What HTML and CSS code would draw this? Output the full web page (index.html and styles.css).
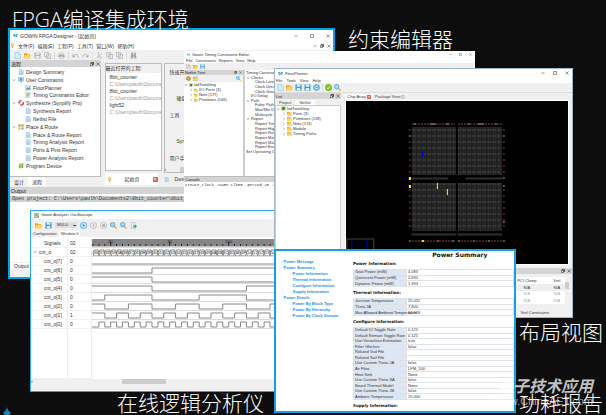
FILE: index.html
```
<!DOCTYPE html>
<html lang="zh-CN">

<head>
    <meta charset="UTF-8">
    <meta name="viewport" content="width=device-width, initial-scale=1.0">
    <title>GOWIN FPGA Designer</title>
    <link rel="stylesheet" href="styles.css">
</head>

<body>
    <svg class="sprite" aria-hidden="true">
        <symbol id="doc" viewBox="0 0 16 16"><path d="M3 1h8l3 3v11H3z" fill="#cfe8f7" stroke="#5aa5cf" /><path d="M5 6h7M5 9h7M5 12h7" stroke="#7fb2d0" /></symbol>
        <symbol id="page" viewBox="0 0 16 16"><path d="M2 1h9l4 4v10H2z" fill="#d9effb" stroke="#6cb4dc" /><path d="M10 1v5h5" fill="#fff" stroke="#6cb4dc" /></symbol>
        <symbol id="folder" viewBox="0 0 16 16"><path d="M0 3h6l2 2h6v9H0z" fill="#e9a623" /><path d="M2 7h14l-2 7H0z" fill="#ffd45c" /></symbol>
        <symbol id="save" viewBox="0 0 16 16"><path d="M1 1h14v14H1z" fill="#3f9bd4" /><path d="M4 1h8v5H4zM4 9h8v6H4z" fill="#dff1fb" /></symbol>
        <symbol id="save-off" viewBox="0 0 16 16"><path d="M1 1h14v14H1z" fill="#b5b5b5" /><path d="M4 1h8v5H4zM4 9h8v6H4z" fill="#eee" /></symbol>
        <symbol id="copy" viewBox="0 0 16 16"><path d="M1 1h9v10H1zM6 5h9v10H6z" fill="#eee" stroke="#aaa" stroke-width="1.5" /></symbol>
        <symbol id="print" viewBox="0 0 16 16"><path d="M1 6h14v6H1z" fill="#aaa" /><path d="M4 2h8v4H4zM4 10h8v5H4z" fill="#eee" stroke="#aaa" /></symbol>
        <symbol id="undo" viewBox="0 0 16 16"><path d="M4 8c3-4 9-3 10 4" fill="none" stroke="#aaa" stroke-width="2" /><path d="M1 5v7h7z" fill="#aaa" /></symbol>
        <symbol id="redo" viewBox="0 0 16 16"><path d="M12 8c-3-4-9-3-10 4" fill="none" stroke="#aaa" stroke-width="2" /><path d="M15 5v7H8z" fill="#aaa" /></symbol>
        <symbol id="cut" viewBox="0 0 16 16"><path d="M4 1l5 10M12 3L5 10" stroke="#aaa" stroke-width="1.5" /><circle cx="4" cy="12" r="2" fill="none" stroke="#aaa" /><circle cx="11" cy="13" r="2" fill="none" stroke="#aaa" /></symbol>
        <symbol id="find" viewBox="0 0 16 16"><path d="M3 1h4v5h2V1h4l2 14H9v-4H7v4H1z" fill="#aaa" /></symbol>
        <symbol id="zoom" viewBox="0 0 16 16"><path d="M9 9l6 6" stroke="#e8a33a" stroke-width="3" /><circle cx="6" cy="6" r="5" fill="#a8dbf5" stroke="#4ba3d6" stroke-width="2" /></symbol>
        <symbol id="check" viewBox="0 0 16 16"><circle cx="8" cy="8" r="8" fill="#7ac31d" /><path d="M4 8l3 3 5-6" fill="none" stroke="#fff" stroke-width="2" /></symbol>
        <symbol id="reload" viewBox="0 0 16 16"><circle cx="8" cy="8" r="7" fill="#5eb0e2" stroke="#358cc4" /><path d="M4 8a4 4 0 0 1 7-2M12 8a4 4 0 0 1-7 2" fill="none" stroke="#fff" stroke-width="2" /></symbol>
        <symbol id="play" viewBox="0 0 16 16"><circle cx="8" cy="8" r="7" fill="#d8effc" stroke="#3fa0dc" stroke-width="2" /><path d="M6 4l6 4-6 4z" fill="#3fa0dc" /></symbol>
        <symbol id="play-off" viewBox="0 0 16 16"><circle cx="8" cy="8" r="7" fill="#eee" stroke="#bbb" stroke-width="2" /><path d="M10 4L5 8l5 4z" fill="#bbb" /></symbol>
        <symbol id="stop-off" viewBox="0 0 16 16"><circle cx="8" cy="8" r="7" fill="#eee" stroke="#bbb" stroke-width="2" /><path d="M5 5h6v6H5z" fill="#aaa" /></symbol>
        <symbol id="export" viewBox="0 0 16 16"><path d="M3 1h9v14H3z" fill="#e4f0f6" stroke="#8ab" /><path d="M7 8h4V5l5 5-5 5v-3H7z" fill="#4cae4c" /></symbol>
        <symbol id="filter" viewBox="0 0 16 16"><path d="M1 1h14v10H1z" fill="#b9dff5" stroke="#4b94c4" /><path d="M4 4h8l-3 4v7H7V8z" fill="#3c7fb0" /></symbol>
        <symbol id="plan" viewBox="0 0 16 16"><path d="M1 2h14v12H1z" fill="#d4e9ee" stroke="#8ab" /><path d="M3 11l4-5 3 3 3-4v7H3z" fill="#3f9b9b" /><path d="M11 3h3v3h-3z" fill="#e8a33a" /></symbol>
        <symbol id="clock" viewBox="0 0 16 16"><path d="M2 1h12v14H2z" fill="#eef2e4" stroke="#9a9" /><path d="M4 5h8M4 8h8M4 11h5" stroke="#7a9a5a" stroke-width="2" /></symbol>
        <symbol id="synth" viewBox="0 0 16 16"><path d="M10 3C6 0 1 4 3 8l3-2M6 12c4 4 10 0 8-5l-3 2" fill="none" stroke="#c8405a" stroke-width="3" /></symbol>
        <symbol id="route" viewBox="0 0 16 16"><path d="M1 1h6v6H1z" fill="#e77" /><path d="M9 1h6v6H9z" fill="#7ac31d" /><path d="M1 9h6v6H1z" fill="#f2c04a" /><path d="M9 9h6v6H9z" fill="#5eb0e2" /></symbol>
        <symbol id="down" viewBox="0 0 16 16"><path d="M3 1h4v8h3l-5 6-5-6h3z" fill="#7ac31d" /><path d="M9 1h5v12H9z" fill="#8ba04a" /></symbol>
        <symbol id="logo" viewBox="0 0 16 16"><path d="M0 5l4-3 4 4 4-4 4 3-4 9-4-3-4 3z" fill="#2d9fc9" /><path d="M4 6l4 6 4-6" fill="none" stroke="#d8f2fb" stroke-width="2" /></symbol>
        <symbol id="scope" viewBox="0 0 16 16"><path d="M1 1h14v14H1z" fill="#d6ecd2" stroke="#5a9a5a" stroke-width="2" /><path d="M3 9h3V5h4v6h3" fill="none" stroke="#3a7a3a" stroke-width="2" /></symbol>
        <symbol id="chip" viewBox="0 0 16 16"><path d="M2 2h12v12H2z" fill="#6ab02c" /><path d="M5 5h6v6H5z" fill="#3d741a" /></symbol>
        <symbol id="bulb" viewBox="0 0 16 16"><circle cx="8" cy="6" r="5" fill="#ffd45c" stroke="#e0a83a" /><path d="M6 11h4v4H6z" fill="#a98d4a" /></symbol>
        <symbol id="gear" viewBox="0 0 16 16"><circle cx="8" cy="8" r="6" fill="#d19a2a" stroke="#a87412" stroke-width="3" stroke-dasharray="3 1" /><circle cx="8" cy="8" r="2" fill="#f7e3b0" /></symbol>
        <symbol id="min" viewBox="0 0 16 16"><path d="M2 8h12" stroke="currentColor" stroke-width="2" /></symbol>
        <symbol id="max" viewBox="0 0 16 16"><path d="M2 2h12v12H2z" fill="none" stroke="currentColor" stroke-width="2" /></symbol>
        <symbol id="dock" viewBox="0 0 16 16"><path d="M5 2h9v8H5z" fill="none" stroke="currentColor" stroke-width="3" /><path d="M1 6h9v8H1z" fill="#ddd" stroke="currentColor" stroke-width="2" /></symbol>
        <symbol id="close" viewBox="0 0 16 16"><path d="M2 2l12 12M14 2L2 14" stroke="currentColor" stroke-width="2" /></symbol>
        <symbol id="open" viewBox="0 0 16 16"><path d="M3 5l5 6 5-6" fill="none" stroke="#555" stroke-width="2" /></symbol>
        <symbol id="shut" viewBox="0 0 16 16"><path d="M5 3l6 5-6 5" fill="none" stroke="#888" stroke-width="2" /></symbol>
        <pattern id="slices" width="5" height="6" patternUnits="userSpaceOnUse">
            <path d="M0 0h5v6H0z" fill="#2a2a2a" />
            <path d="M0 0v6M3 0v6" stroke="#141414" />
            <path d="M0 5h5" stroke="#454545" stroke-dasharray="2 1" />
        </pattern>
    </svg>

    <main class="desktop">
        <h1 class="caption caption-designer">FPGA编译集成环境</h1>
        <h2 class="caption caption-constraints">约束编辑器</h2>
        <h2 class="caption caption-floor">布局视图</h2>
        <h2 class="caption caption-scope">在线逻辑分析仪</h2>

        <section class="window designer">
            <header class="titlebar">
                <svg><use href="#logo" /></svg>
                <span>GOWIN FPGA Designer - [起始页]</span>
                <div class="controls">
                    <button aria-label="Minimize"><svg><use href="#min" /></svg></button>
                    <button aria-label="Maximize"><svg><use href="#max" /></svg></button>
                    <button aria-label="Close"><svg><use href="#close" /></svg></button>
                </div>
            </header>
            <nav class="menu">
                <svg><use href="#bulb" /></svg>
                <button>文件(F)</button>
                <button>编辑(E)</button>
                <button>工程(P)</button>
                <button>工具(T)</button>
                <button>窗口(W)</button>
                <button>帮助(H)</button>
                <div class="controls">
                    <button aria-label="Minimize page"><svg><use href="#min" /></svg></button>
                    <button aria-label="Restore page"><svg><use href="#dock" /></svg></button>
                    <button aria-label="Close page"><svg><use href="#close" /></svg></button>
                </div>
            </nav>
            <div class="toolbar">
                <button aria-label="New"><svg><use href="#page" /></svg></button>
                <button aria-label="Open"><svg><use href="#folder" /></svg></button>
                <button aria-label="Save"><svg><use href="#save-off" /></svg></button>
                <button aria-label="Save all"><svg><use href="#copy" /></svg></button>
                <i></i>
                <button aria-label="Print"><svg><use href="#print" /></svg></button>
                <i></i>
                <button aria-label="Undo"><svg><use href="#undo" /></svg></button>
                <button aria-label="Redo"><svg><use href="#redo" /></svg></button>
                <i></i>
                <button aria-label="Cut"><svg><use href="#cut" /></svg></button>
                <button aria-label="Copy"><svg><use href="#copy" /></svg></button>
                <button aria-label="Paste"><svg><use href="#copy" /></svg></button>
                <i></i>
                <button aria-label="Find"><svg><use href="#find" /></svg></button>
            </div>
            <div class="workspace">
                <aside class="process">
                    <div class="dock-title">流程
                        <div class="controls">
                            <button aria-label="Float"><svg><use href="#dock" /></svg></button>
                            <button aria-label="Close"><svg><use href="#close" /></svg></button>
                        </div>
                    </div>
                    <ul class="tree">
                        <li><b></b><svg><use href="#doc" /></svg>Design Summary</li>
                        <li><svg class="arrow"><use href="#open" /></svg><svg><use href="#filter" /></svg>User Constraints</li>
                        <li class="sub"><svg><use href="#plan" /></svg>FloorPlanner</li>
                        <li class="sub"><svg><use href="#clock" /></svg>Timing Constraints Editor</li>
                        <li><svg class="arrow"><use href="#open" /></svg><svg><use href="#synth" /></svg>Synthesize (Synplify Pro)</li>
                        <li class="sub"><svg><use href="#doc" /></svg>Synthesis Report</li>
                        <li class="sub"><svg><use href="#doc" /></svg>Netlist File</li>
                        <li><svg class="arrow"><use href="#open" /></svg><svg><use href="#route" /></svg>Place &amp; Route</li>
                        <li class="sub"><svg><use href="#doc" /></svg>Place &amp; Route Report</li>
                        <li class="sub"><svg><use href="#doc" /></svg>Timing Analysis Report</li>
                        <li class="sub"><svg><use href="#doc" /></svg>Ports &amp; Pins Report</li>
                        <li class="sub"><svg><use href="#doc" /></svg>Power Analysis Report</li>
                        <li><b></b><svg><use href="#down" /></svg>Program Device</li>
                    </ul>
                    <div class="tabs">
                        <button>设计</button>
                        <button class="active">流程</button>
                    </div>
                </aside>
                <div class="start">
                    <div class="start-page">
                        <div class="recent">
                            <h3>最近打开的工程:</h3>
                            <a href="#">8bit_counter</a>
                            <p>C:\Users\paulh\Documents</p>
                            <a href="#">8bit_counter</a>
                            <p>C:\Users\paulh\Documents</p>
                            <a href="#">light52</a>
                            <p>C:\Users\paulh\Documents</p>
                        </div>
                        <div class="quick">
                            <h3>快速开始</h3>
                            <p>硬盘</p>
                            <h3>工具</h3>
                            <p>Synplify</p>
                            <h3>用户手册</h3>
                            <div class="hscroll"><span>‹</span></div>
                        </div>
                    </div>
                    <div class="page-tabs">
                        <button class="active"><svg><use href="#bulb" /></svg>起始页<em>×</em></button>
                        <button><svg><use href="#doc" /></svg>Design</button>
                    </div>
                </div>
            </div>
            <div class="dock-title">Output</div>
            <div class="output">
                <p>Open project: C:\Users\paulh\Documents2\8bit_counter\8bit_counter.gprj</p>
            </div>
            <div class="tabs output-tab"><button class="active">Output</button></div>
            <footer class="status"></footer>
        </section>

        <section class="window constraints">
            <header class="titlebar">
                <svg><use href="#logo" /></svg>
                <span>Gowin Timing Constraints Editor</span>
                <div class="controls">
                    <button aria-label="Minimize"><svg><use href="#min" /></svg></button>
                    <button aria-label="Maximize"><svg><use href="#max" /></svg></button>
                    <button aria-label="Close"><svg><use href="#close" /></svg></button>
                </div>
            </header>
            <nav class="menu">
                <button>File</button>
                <button>Constraints</button>
                <button>Reports</button>
                <button>View</button>
                <button>Help</button>
            </nav>
            <div class="toolbar">
                <button aria-label="New"><svg><use href="#copy" /></svg></button>
                <button aria-label="Open"><svg><use href="#folder" /></svg></button>
                <button aria-label="Save"><svg><use href="#save" /></svg></button>
            </div>
            <div class="editor">
                <div class="netlist">
                    <div class="dock-title">Netlist Tree
                        <div class="controls">
                            <button aria-label="Float"><svg><use href="#dock" /></svg></button>
                            <button aria-label="Close"><svg><use href="#close" /></svg></button>
                        </div>
                    </div>
                    <div class="toolbar">
                        <button aria-label="Settings"><svg><use href="#gear" /></svg></button>
                        <button class="pressed" aria-label="Tree"><svg><use href="#folder" /></svg></button>
                        <button class="push" aria-label="Search"><svg><use href="#zoom" /></svg></button>
                    </div>
                    <ul class="tree">
                        <li><svg class="arrow"><use href="#open" /></svg><svg><use href="#chip" /></svg>ledTwinkling</li>
                        <li class="sub"><svg class="arrow"><use href="#shut" /></svg><svg><use href="#folder" /></svg>I/O Ports (3)</li>
                        <li class="sub"><svg class="arrow"><use href="#shut" /></svg><svg><use href="#folder" /></svg>Nets (177)</li>
                        <li class="sub"><svg class="arrow"><use href="#shut" /></svg><svg><use href="#folder" /></svg>Primitives (146)</li>
                    </ul>
                </div>
                <ul class="tree timing">
                    <li class="head">Timing Constraints</li>
                    <li><svg class="arrow"><use href="#open" /></svg>Clocks</li>
                    <li class="sub">Clock Latency</li>
                    <li class="sub">Clock Uncertainty</li>
                    <li class="sub">Clock Group</li>
                    <li><b></b>I/O Delay</li>
                    <li><svg class="arrow"><use href="#open" /></svg>Path</li>
                    <li class="sub">False Path</li>
                    <li class="sub">Max/Min Delay</li>
                    <li class="sub">Multicycle Path</li>
                    <li><svg class="arrow"><use href="#open" /></svg>Report</li>
                    <li class="sub">Report Timing</li>
                    <li class="sub">Report High Fanout</li>
                    <li class="sub">Report Route</li>
                    <li class="sub">Report Min Pulse</li>
                    <li class="sub">Report Max Freq</li>
                    <li class="sub">Report Exception</li>
                    <li>Set Operating Conditions</li>
                </ul>
            </div>
            <div class="dock-title">Console</div>
            <p class="console">create_clock -name clk50 -period 20 -waveform {0 10} [get_ports {clk}]</p>
        </section>

        <section class="window scope">
            <header class="titlebar">
                <svg><use href="#scope" /></svg>
                <span>Gowin Analyzer Oscilloscope</span>
            </header>
            <div class="toolbar">
                <button aria-label="Open"><svg><use href="#folder" /></svg></button>
                <button aria-label="Save"><svg><use href="#save" /></svg></button>
                <select aria-label="Core">
                    <option>MUL0</option>
                </select>
                <button aria-label="Run"><svg><use href="#play" /></svg></button>
                <button aria-label="Step"><svg><use href="#play-off" /></svg></button>
                <button aria-label="Stop"><svg><use href="#stop-off" /></svg></button>
                <button aria-label="Zoom in"><svg><use href="#zoom" /></svg></button>
                <button aria-label="Zoom out"><svg><use href="#zoom" /></svg></button>
                <button aria-label="Export"><svg><use href="#export" /></svg></button>
            </div>
            <div class="tabs">
                <button>Configuration</button>
                <button class="active">Window 0</button>
            </div>
            <div class="signals" id="signals"></div>
            <div class="hscroll"><span>‹</span></div>
            <footer class="status"></footer>
        </section>

        <section class="window floor">
            <header class="titlebar">
                <svg><use href="#logo" /></svg>
                <span>FloorPlanner</span>
                <div class="controls">
                    <button aria-label="Minimize"><svg><use href="#min" /></svg></button>
                    <button aria-label="Maximize"><svg><use href="#max" /></svg></button>
                    <button aria-label="Close"><svg><use href="#close" /></svg></button>
                </div>
            </header>
            <nav class="menu">
                <button>File</button>
                <button>Tools</button>
                <button>View</button>
                <button>Help</button>
            </nav>
            <div class="toolbar">
                <button aria-label="New"><svg><use href="#page" /></svg></button>
                <button aria-label="Open"><svg><use href="#folder" /></svg></button>
                <button aria-label="Save"><svg><use href="#save" /></svg></button>
                <button aria-label="Save as"><svg><use href="#save" /></svg></button>
                <button aria-label="Reload"><svg><use href="#reload" /></svg></button>
                <i></i>
                <button aria-label="Check"><svg><use href="#check" /></svg></button>
                <button aria-label="Search"><svg><use href="#zoom" /></svg></button>
            </div>
            <div class="planner">
                <aside>
                    <div class="dock-title">List
                        <div class="controls">
                            <button aria-label="Float"><svg><use href="#dock" /></svg></button>
                            <button aria-label="Close"><svg><use href="#close" /></svg></button>
                        </div>
                    </div>
                    <div class="tabs">
                        <button>Project</button>
                        <button class="active">Netlist</button>
                    </div>
                    <ul class="tree">
                        <li><svg class="arrow"><use href="#open" /></svg><svg><use href="#chip" /></svg>ledTwinkling</li>
                        <li class="sub"><svg class="arrow"><use href="#shut" /></svg><svg><use href="#folder" /></svg>Ports (3)</li>
                        <li class="sub"><svg class="arrow"><use href="#shut" /></svg><svg><use href="#folder" /></svg>Primitives (138)</li>
                        <li class="sub"><svg class="arrow"><use href="#shut" /></svg><svg><use href="#folder" /></svg>Nets (174)</li>
                        <li class="sub"><svg class="arrow"><use href="#shut" /></svg><svg><use href="#folder" /></svg>Module</li>
                        <li class="sub"><svg class="arrow"><use href="#shut" /></svg><svg><use href="#folder" /></svg>Timing Paths</li>
                    </ul>
                </aside>
                <div class="chip-view">
                    <div class="tabs">
                        <button class="active">Chip Array <em>×</em></button>
                        <button>Package View <em class="off">×</em></button>
                    </div>
                    <svg class="array" viewBox="347 102 222 163" preserveAspectRatio="xMidYMin slice">
                        <g fill="url(#slices)">
                            <path d="M413 128h44v48h-44zM459 128h44v48h-44zM413 184h44v48h-44zM459 184h44v48h-44z" />
                        </g>
                        <g fill="none" stroke="#4a2020" stroke-width="2" stroke-dasharray="2 1">
                            <path d="M413 125h43M459 125h44M413 242h43M459 242h44" />
                            <path d="M411 130v46M505 130v46M411 190v42M505 190v42" stroke-dasharray="2 4" />
                        </g>
                        <g fill="none" stroke="#555">
                            <path d="M413 179h36v1h-36zM467 179h36v1h-36z" stroke="#383838" />
                            <path d="M413 235h44v1h-44zM459 235h44v1h-44z" stroke="#383838" />
                            <path d="M415 125h2M431 125h6M447 125h3M469 125h2M479 125h6M496 125h2M410 137h2M504 137h2M504 179h2M504 187h2M504 223h2M410 242h2M438 242h2M453 242h2M459 242h2M474 242h2M489 242h2M504 242h2" stroke-width="2" />
                        </g>
                        <path d="M423 152h2v6h-2z" fill="#0008d8" />
                        <path d="M438 184h1v6h-1zM448 190h1v6h-1zM410 178h2v3h-2zM410 186h2v3h-2zM423 241h2v2h-2z" fill="#ff0" />
                        <path d="M348 240h27v30h-27z" fill="none" stroke="#444" stroke-width="1" />
                        <path d="M353 241v20M368 241v20" stroke="#00a" />
                    </svg>
                </div>
            </div>
            <div class="dock-title io-title">
                <div class="controls">
                    <button aria-label="Float"><svg><use href="#dock" /></svg></button>
                    <button aria-label="Close"><svg><use href="#close" /></svg></button>
                </div>
            </div>
            <div class="io">
                <table>
                    <tr><th>PCI Clamp</th><th>Vref</th></tr>
                    <tr class="odd"><td>N/A</td><td>N/A</td></tr>
                    <tr class="dim"><td>N/A</td><td>N/A</td></tr>
                    <tr class="dim"><td>N/A</td><td>N/A</td></tr>
                </table>
                <div class="vscroll"></div>
            </div>
            <div class="tabs io-tabs"><button>Vref Constraints</button></div>
        </section>

        <section class="window power">
            <nav>
                <a href="#message">Power Message</a>
                <a href="#summary">Power Summary</a>
                <a class="sub" href="#info">Power Information</a>
                <a class="sub" href="#thermal">Thermal Information</a>
                <a class="sub" href="#configure">Configure Information</a>
                <a class="sub" href="#supply">Supply Information</a>
                <a href="#details">Power Details</a>
                <a class="sub" href="#block">Power By Block Type</a>
                <a class="sub" href="#hierarchy">Power By Hierarchy</a>
                <a class="sub" href="#clock-domain">Power By Clock Domain</a>
            </nav>
            <article>
                <h2>Power Summary</h2>
                <h3>Power Information:</h3>
                <table class="short">
                    <tr><th>Total Power (mW)</th><td>4.083</td></tr>
                    <tr><th>Quiescent Power (mW)</th><td>2.690</td></tr>
                    <tr><th>Dynamic Power (mW)</th><td>1.393</td></tr>
                </table>
                <h3>Thermal Information:</h3>
                <table class="short">
                    <tr><th>Junction Temperature</th><td>25.032</td></tr>
                    <tr><th>Theta JA</th><td>7.800</td></tr>
                    <tr><th>Max Allowed Ambient Temperature</th><td>84.968</td></tr>
                </table>
                <h3>Configure Information:</h3>
                <table class="long">
                    <tr><th>Default IO Toggle Rate</th><td>0.125</td></tr>
                    <tr><th>Default Remain Toggle Rate</th><td>0.125</td></tr>
                    <tr><th>Use Vectorless Estimation</th><td>true</td></tr>
                    <tr><th>Filter Glitches</th><td>false</td></tr>
                    <tr><th>Related Vcd File</th><td></td></tr>
                    <tr><th>Related Saif File</th><td></td></tr>
                    <tr><th>Use Custom Theta JA</th><td>false</td></tr>
                    <tr><th>Air Flow</th><td>LFM_100</td></tr>
                    <tr><th>Heat Sink</th><td>None</td></tr>
                    <tr><th>Use Custom Theta SA</th><td>false</td></tr>
                    <tr><th>Board Thermal Model</th><td>None</td></tr>
                    <tr><th>Use Custom Theta JB</th><td>false</td></tr>
                    <tr><th>Ambient Temperature</th><td>25.000</td></tr>
                </table>
                <h3>Supply Information:</h3>
            </article>
        </section>

        <div class="watermark">
            <strong>电子技术应用</strong>
            <span>www.ChinaAET.com</span>
        </div>
        <h2 class="caption caption-power">功耗报告</h2>
        <svg class="marker" viewBox="0 0 8 8"><path d="M4 0l1 3 3 3-2 2H2L0 6l3-3z" fill="#1287c4" /></svg>
    </main>

    <script>
        const step = 5.9
        const first = 0x36
        const count = 32
        const x = i => (i * step + 1).toFixed(1)

        const ruler = () => {
            let out = '<rect width="100%" height="7" fill="#858585"/>'
            for (let i = 0; i < count; i++) {
                const major = i % 10 === 3
                out += `<path d="M${x(i)} ${major ? 3 : 5}V7" stroke="#222"/>`
                if (major) out += `<text x="${x(i)}" y="4" text-anchor="middle">${80 + i - 3}</text>`
            }
            return out
        }

        const bus = () => {
            let out = ''
            for (let i = 0; i < count; i++) {
                const a = i * step + 1
                out += `<path d="M${a} 5l1 -3h4l1 3l-1 3h-4z"/>`
                out += `<text x="${a + 3}" y="6" text-anchor="middle">${(first + i).toString(16).toUpperCase()}</text>`
            }
            return out
        }

        // one square wave per counter bit
        const wave = bit => {
            const level = i => ((first + i) >> bit & 1) ? 2 : 7
            let d = `M0 ${level(0)}`
            for (let i = 1; i < count; i++) {
                if (level(i) !== level(i - 1)) d += `H${x(i)}V${level(i)}`
            }
            return `<path d="${d}H400"/>`
        }

        const rows = [['Signals', '02', ruler()], ['cnt_o', '02', bus()]]
        for (let bit = 7; bit >= 0; bit--) {
            rows.push([`cnt_o[${bit}]`, bit === 1 ? '1' : '0', wave(bit)])
        }

        document.querySelector('#signals').innerHTML = rows.map(([name, value, art], i) => `
            <div class="signal${i === 1 ? ' bus' : ''}">
                <span>${i === 1 ? '<svg class="arrow"><use href="#open"/></svg>' : ''}${name}</span>
                <span>${value}</span>
                <svg>${art}</svg>
            </div>`).join('') + '<div class="signal rest"><span></span><span></span></div>'
    </script>
</body>

</html>
```

FILE: styles.css
```
* {
    box-sizing: border-box;
    margin: 0;
    padding: 0;
}

body {
    background: #0d0d0d;
    color: #333;
    font: 5px/6px "Liberation Sans", "Noto Sans CJK SC", sans-serif;
}

button,
select {
    border: none;
    background: none;
    color: inherit;
    font: inherit;
    white-space: nowrap;
}

ul {
    list-style: none;
}

a {
    color: inherit;
    text-decoration: none;
}

svg {
    display: block;
    flex: none;
}

.sprite {
    position: absolute;
    width: 0;
    height: 0;
}

.desktop {
    position: relative;
    min-height: 100vh;
    overflow: hidden;
}

/* captions on the desktop */

.caption {
    position: absolute;
    z-index: 1;
    color: #fff;
    font: 300 21px/24px "Open Sans", "Noto Sans CJK SC", sans-serif;
    white-space: nowrap;
}

.caption-designer {
    left: 12px;
    top: 7px;
}

.caption-constraints {
    left: 348px;
    top: 27px;
}

.caption-floor {
    left: 519px;
    top: 320px;
}

.caption-scope {
    left: 117px;
    top: 391px;
}

.caption-power {
    left: 519px;
    top: 391px;
}

.watermark {
    position: absolute;
    right: 13px;
    top: 375px;
    display: flex;
    flex-direction: column;
    align-items: flex-end;
    color: rgba(255, 255, 255, .75);
}

.watermark strong {
    font: italic 700 16px/20px "Noto Sans CJK SC", sans-serif;
}

.watermark span {
    color: rgba(255, 255, 255, .6);
    font-size: 11px;
    line-height: 12px;
}

.marker {
    position: absolute;
    left: 3px;
    bottom: 0;
    width: 8px;
    height: 8px;
}

/* shared window parts */

.window {
    position: absolute;
    display: flex;
    flex-direction: column;
    background: #fff;
    overflow: hidden;
    white-space: nowrap;
}

.titlebar,
.menu,
.toolbar,
.dock-title,
.tabs {
    display: flex;
    flex: none;
    align-items: center;
}

.titlebar {
    gap: 2px;
    padding: 0 3px;
}

.titlebar svg {
    width: 5px;
    height: 5px;
}

.controls {
    display: flex;
    align-items: center;
    margin-left: auto;
}

.controls svg {
    width: 4px;
    height: 4px;
}

.toolbar {
    gap: 3px;
    padding: 0 4px;
    background: #f0f0f0;
}

.toolbar svg {
    width: 7px;
    height: 7px;
}

.toolbar i {
    width: 1px;
    height: 7px;
    background: #ddd;
}

.dock-title {
    height: 7px;
    padding: 0 1px;
    background: #d4d4d4;
    color: #222;
}

.dock-title .controls {
    gap: 2px;
}

.tabs {
    background: #f0f0f0;
}

.tabs button {
    padding: 0 4px;
}

.tabs .active {
    background: #fff;
}

.tree li {
    display: flex;
    align-items: center;
    gap: 2px;
}

.tree svg {
    width: 5px;
    height: 5px;
}

.tree .arrow,
.tree b {
    flex: none;
    width: 4px;
    height: 4px;
}

em {
    display: inline-block;
    width: 5px;
    height: 5px;
    background: #dd6650;
    color: #fff;
    font-style: normal;
    line-height: 5px;
    text-align: center;
}

em.off {
    background: #ccc;
}

.hscroll {
    flex: none;
    height: 5px;
    background: linear-gradient(#cdcdcd, #cdcdcd) right / 91% 100% no-repeat #f0f0f0;
    line-height: 5px;
}

.status {
    flex: none;
    height: 7px;
    background: #f0f0f0;
}

/* FPGA designer */

.designer {
    left: 8px;
    top: 28px;
    width: 54%;
    border: 2px solid #00a2e8;
}

.designer .titlebar {
    height: 11px;
}

.designer .titlebar .controls {
    gap: 12px;
}

.designer .menu {
    gap: 3px;
    height: 9px;
}

.designer .menu svg {
    width: 5px;
    height: 5px;
}

.designer .menu .controls {
    gap: 3px;
    padding-right: 2px;
}

.designer .menu .controls svg {
    width: 4px;
    height: 4px;
}

.designer > .toolbar {
    height: 10px;
}

.workspace {
    display: flex;
    height: 127px;
    background: #f0f0f0;
}

.process {
    display: flex;
    flex-direction: column;
    width: 28%;
    padding-bottom: 1px;
}

.process .tree {
    display: flex;
    flex: 1;
    flex-direction: column;
    justify-content: space-between;
    padding: 2px 2px 7px;
    border-right: 1px solid #bbb;
    border-bottom: 1px solid #bbb;
    background: #fff;
}

.process .tree .sub {
    padding-left: 13px;
}

.process .tree svg:not(.arrow) {
    width: 6px;
    height: 6px;
}

.process .tabs {
    height: 9px;
}

.process .tabs button {
    height: 9px;
}

.start {
    display: flex;
    flex: 1;
    flex-direction: column;
    justify-content: space-between;
    padding: 3px 0 2px 4px;
}

.start-page {
    display: flex;
    flex: 1;
    gap: 2px;
}

.recent {
    width: 57px;
    height: 108px;
    border: 1px solid #bbb;
    background: #fff;
    overflow: hidden;
}

.recent h3 {
    height: 9px;
    background: #f0f0f0;
    font-size: 5px;
    font-weight: 400;
    line-height: 8px;
}

.recent a,
.recent p {
    display: block;
    height: 7px;
    padding-left: 4px;
    line-height: 8px;
}

.recent p {
    color: #999;
    font-style: italic;
}

.quick {
    display: flex;
    flex: 1;
    flex-direction: column;
    justify-content: space-between;
    border: 1px solid #bbb;
}

.quick h3 {
    padding: 5px 0 0 5px;
    font-size: 5px;
    font-weight: 400;
}

.quick p {
    padding: 14px 0 0 12px;
}

.page-tabs {
    display: flex;
    height: 12px;
    gap: 6px;
}

.page-tabs button {
    display: flex;
    align-items: center;
    gap: 6px;
}

.page-tabs .active {
    gap: 13px;
    padding-left: 2px;
    background: #fff;
}

.page-tabs svg {
    width: 5px;
    height: 5px;
}

.output {
    height: 68px;
    padding-top: 2px;
}

.output p {
    padding: 0 2px;
    background: #d0d0d0;
    font: 5px/6px "Liberation Mono", monospace;
}

.output-tab {
    height: 8px;
}

/* timing constraints editor */

.constraints {
    left: 184px;
    top: 51px;
    width: 48%;
    height: 170px;
    font-size: 4px;
    line-height: 4px;
}

.constraints .titlebar {
    height: 7px;
}

.constraints .titlebar svg,
.constraints .controls svg {
    width: 3px;
    height: 3px;
}

.constraints .titlebar .controls {
    gap: 7px;
}

.constraints .menu {
    height: 5px;
    gap: 3px;
    padding-left: 2px;
}

.constraints .toolbar {
    height: 7px;
    gap: 2px;
    padding: 0 2px;
}

.constraints .toolbar svg {
    width: 5px;
    height: 5px;
}

.constraints .dock-title {
    height: 5px;
}

.editor {
    display: flex;
    height: 107px;
    border-bottom: 1px solid #bbb;
}

.netlist {
    width: 61px;
    border-right: 2px solid #ccc;
}

.netlist .pressed {
    background: #c4e2f5;
}

.netlist .push {
    margin-left: auto;
}

.netlist .tree li {
    height: 5px;
}

.netlist .tree .sub {
    padding-left: 5px;
}

.constraints .tree li {
    gap: 1px;
}

.constraints .tree svg {
    width: 4px;
    height: 4px;
}

.timing {
    display: flex;
    flex: 1;
    flex-direction: column;
    justify-content: space-between;
    padding: 1px 0 22px 1px;
}

.timing .sub {
    padding-left: 9px;
}

.console {
    padding: 1px;
    font: 4px/5px "Liberation Mono", monospace;
}

/* oscilloscope */

.scope {
    left: 30px;
    top: 210px;
    width: 41%;
    border: 1px solid #2ba8ee;
}

.scope .titlebar {
    height: 8px;
    font-size: 4px;
}

.scope .toolbar {
    height: 12px;
}

.scope select {
    appearance: none;
    width: 22px;
    height: 6px;
    padding-left: 2px;
    border-radius: 1px;
    background: linear-gradient(#555, #555) 18px 3px / 3px 1px no-repeat #ddd;
    font-size: 4px;
}

.scope .tabs {
    height: 6px;
}

.scope .tabs button {
    height: 6px;
    padding: 0 2px;
    font-size: 4px;
}

.signals {
    padding-top: 2px;
}

.signal {
    display: grid;
    grid-template-columns: 37px 24px 1fr;
    height: 9px;
    line-height: 8px;
}

.signal span {
    border-right: 1px solid #eee;
    border-bottom: 1px solid #f2f2f2;
    padding-left: 13px;
}

.signal span + span {
    padding-left: 2px;
}

.signal > svg {
    width: 100%;
    height: 9px;
    border-bottom: 1px solid #ddd;
    fill: none;
    stroke: #888;
}

.signal text {
    fill: #222;
    stroke: none;
    font-size: 4px;
}

.signal .arrow {
    width: 4px;
    height: 4px;
}

.bus span:first-child {
    display: flex;
    align-items: center;
    gap: 2px;
    padding-left: 2px;
}

.rest {
    height: 50px;
}

.scope .hscroll {
    background: linear-gradient(#cdcdcd, #cdcdcd) 45% 0 / 18% 100% no-repeat #f0f0f0;
}

/* floor planner */

.floor {
    left: 274px;
    top: 68px;
    right: 33px;
    border: 1px solid #9fb6c8;
    line-height: 5px;
}

.floor .titlebar {
    height: 8px;
    font-size: 4px;
}

.floor .titlebar .controls {
    gap: 8px;
}

.floor .menu {
    height: 6px;
    gap: 4px;
    padding-left: 1px;
    font-size: 4px;
}

.floor .toolbar {
    height: 10px;
    gap: 2px;
    padding: 0 2px;
    border-bottom: 1px solid #ddd;
}

.planner {
    display: flex;
    height: 175px;
    background: #f0f0f0;
}

.floor .dock-title {
    height: 6px;
    font-size: 4px;
}

.planner aside {
    display: flex;
    flex-direction: column;
    width: 23%;
    padding-right: 2px;
}

.planner .tabs {
    height: 6px;
    font-size: 4px;
}

.planner .tree {
    flex: 1;
    border: 1px solid #ccc;
    background: #fff;
    font-size: 4px;
}

.planner .tree li {
    height: 5px;
    gap: 1px;
}

.planner .tree .sub {
    padding-left: 6px;
}

.chip-view {
    display: flex;
    flex: 1;
    flex-direction: column;
    padding: 1px 3px 3px 2px;
}

.chip-view .tabs {
    padding-bottom: 1px;
}

.chip-view .tabs button {
    padding: 0 2px;
}

.chip-view em {
    width: 4px;
    height: 4px;
    line-height: 4px;
}

.array {
    flex: 1;
    width: 100%;
    min-height: 0;
    border: 1px solid #fff;
    background: #000;
}

.io {
    display: flex;
    height: 34px;
    padding: 3px 3px 4px;
    background: #f0f0f0;
}

.io table {
    flex: 1;
    margin-left: 78%;
    border-spacing: 0;
    background: #fff;
    font-size: 4px;
    text-align: center;
}

.io th {
    font-weight: 400;
}

.odd {
    background: #eee;
}

.dim {
    color: #aaa;
}

.vscroll {
    width: 4px;
    background: linear-gradient(#ccc, #ccc) 0 5px / 100% 7px no-repeat #f0f0f0;
}

.io-tabs {
    justify-content: flex-end;
    height: 9px;
    padding-right: 19px;
    font-size: 4px;
}

/* power report */

.power {
    left: 274px;
    top: 249px;
    width: 40%;
    flex-direction: row;
    border: 2px solid #149fe4;
    font-size: 4px;
    line-height: 4px;
}

.power nav {
    display: flex;
    flex-direction: column;
    width: 77px;
    padding: 8px 0 0 5px;
    color: #1d8fe0;
    font-weight: 700;
    line-height: 6px;
}

.power nav a::before {
    content: "◦ ";
}

.power nav .sub {
    padding-left: 9px;
}

.power article {
    flex: 1;
}

.power h2,
.power h3 {
    color: #111;
    font-family: "DejaVu Sans", sans-serif;
}

.power h2 {
    padding-right: 27px;
    font-size: 6px;
    line-height: 7px;
    text-align: right;
}

.power h3 {
    height: 11px;
    font-size: 4px;
    line-height: 11px;
}

.power table {
    width: 100%;
    table-layout: fixed;
    border-collapse: collapse;
}

.short {
    height: 18px;
}

.long {
    height: 73px;
}

.power th,
.power td {
    border: 1px solid #dfe3e8;
    padding-left: 1px;
    line-height: 4px;
}

.power th {
    width: 53px;
    background: #dce6f4;
    font-weight: 400;
    text-align: left;
}
```
